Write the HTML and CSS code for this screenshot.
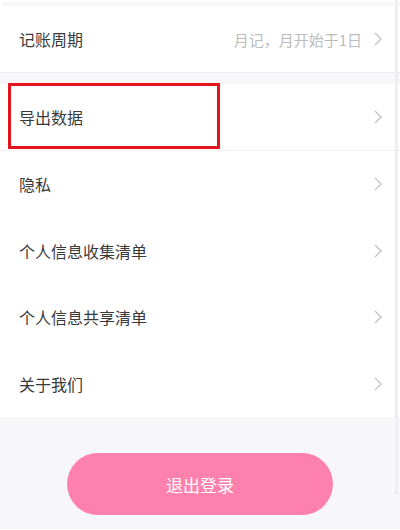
FILE: index.html
```html
<!DOCTYPE html>
<html lang="zh-CN">
<head>
<meta charset="utf-8">
<link rel="stylesheet" href="styles.css">
</head>
<body>
<div class="page">
  <div class="top-strip"></div>
  <div class="row row-bordered">
    <span class="label">记账周期</span>
    <span class="right"><span class="value">月记，月开始于1日</span>
      <svg class="chev" width="8" height="14" viewBox="0 0 8 14"><polyline points="1,1 7,7 1,13" fill="none" stroke="#c4c4c4" stroke-width="1.4"/></svg>
    </span>
  </div>
  <div class="gap"></div>
  <div class="row row-bordered highlight-row">
    <span class="label">导出数据</span>
    <svg class="chev" width="8" height="14" viewBox="0 0 8 14"><polyline points="1,1 7,7 1,13" fill="none" stroke="#c4c4c4" stroke-width="1.4"/></svg>
    <div class="highlight"></div>
  </div>
  <div class="row row-plain">
    <span class="label">隐私</span>
    <svg class="chev" width="8" height="14" viewBox="0 0 8 14"><polyline points="1,1 7,7 1,13" fill="none" stroke="#c4c4c4" stroke-width="1.4"/></svg>
  </div>
  <div class="row row-plain">
    <span class="label">个人信息收集清单</span>
    <svg class="chev" width="8" height="14" viewBox="0 0 8 14"><polyline points="1,1 7,7 1,13" fill="none" stroke="#c4c4c4" stroke-width="1.4"/></svg>
  </div>
  <div class="row row-plain">
    <span class="label">个人信息共享清单</span>
    <svg class="chev" width="8" height="14" viewBox="0 0 8 14"><polyline points="1,1 7,7 1,13" fill="none" stroke="#c4c4c4" stroke-width="1.4"/></svg>
  </div>
  <div class="row row-plain">
    <span class="label">关于我们</span>
    <svg class="chev" width="8" height="14" viewBox="0 0 8 14"><polyline points="1,1 7,7 1,13" fill="none" stroke="#c4c4c4" stroke-width="1.4"/></svg>
  </div>
  <div class="footer">
    <button class="logout">退出登录</button>
  </div>
  <div class="scrollbar"></div>
</div>
</body>
</html>
```
FILE: styles.css
```css
* { box-sizing: border-box; }
html, body {
  margin: 0;
  padding: 0;
  background: #ffffff;
}
body {
  font-family: "Noto Sans CJK SC", "Noto Sans", sans-serif;
}
.page {
  position: relative;
  width: 400px;
  height: 530px;
  overflow: hidden;
  background: #ffffff;
}
.top-strip {
  height: 4px;
  margin: 2px 0 0 2px;
  background: #f7f7f9;
}
.row {
  position: relative;
  display: flex;
  align-items: center;
  justify-content: space-between;
  padding: 0 18px 0 19px;
  background: #ffffff;
}
.row-bordered {
  height: 67px;
  border-bottom: 1px solid #f0f0f2;
}
.row-plain {
  height: 66.5px;
}
.label {
  font-size: 16px;
  color: #3a3a3a;
  line-height: 1;
}
.right {
  display: flex;
  align-items: center;
  gap: 12px;
}
.value {
  font-size: 15px;
  color: #bcbcbc;
  line-height: 1;
}
.chev {
  display: block;
  flex: none;
}
.gap {
  height: 11px;
  background: #f7f7f9;
}
.highlight {
  position: absolute;
  left: 8px;
  top: -1px;
  width: 212px;
  height: 66px;
  border: 3px solid #e3141e;
}
.footer {
  height: 112px;
  background: #f7f7f9;
  display: flex;
  justify-content: center;
  padding-top: 36px;
}
.logout {
  width: 266px;
  height: 62px;
  border: none;
  border-radius: 31px;
  background: #fe81ad;
  color: #ffffff;
  font-family: "Noto Sans CJK SC", "Noto Sans", sans-serif;
  font-size: 17px;
  padding: 0;
}
.scrollbar {
  position: absolute;
  right: 2px;
  top: 0;
  width: 3px;
  height: 495px;
  background: #efeff1;
}
```
